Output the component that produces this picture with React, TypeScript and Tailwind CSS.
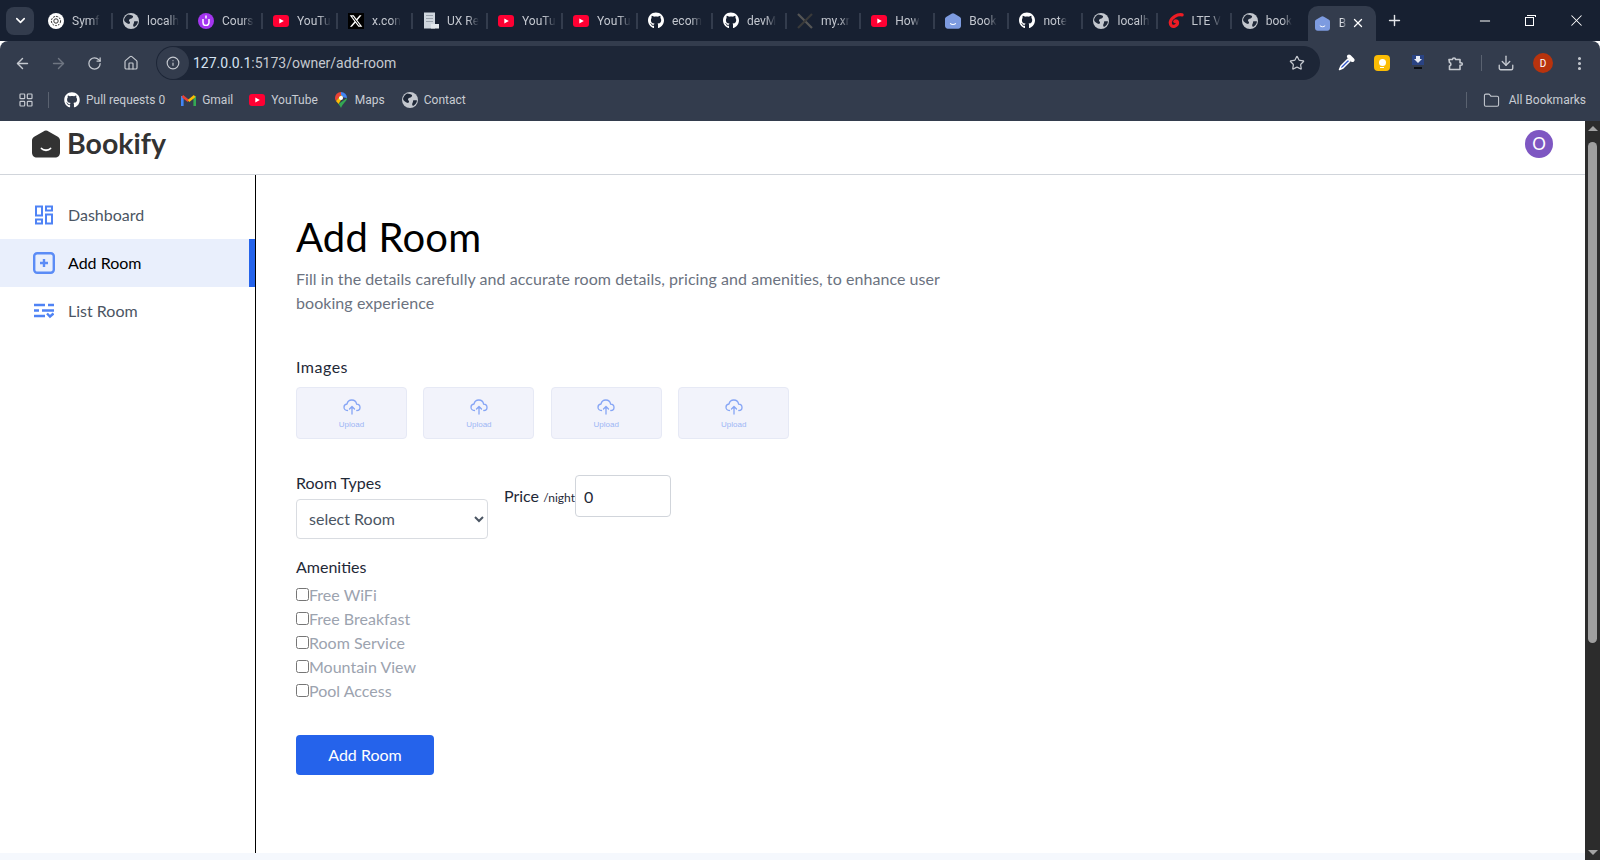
import { ArrowLeft, ArrowRight, ChevronDown, Download, EllipsisVertical, Folder, Home, Info, LayoutGrid, Minus, Plus, RotateCw, Star, X } from "lucide-react";
import { FaGithub, FaXTwitter } from "react-icons/fa6";

const uiFont = "font-['Roboto','Noto_Sans',sans-serif]";

function YouTubeIcon() {
  return (
    <svg width="16" height="12" viewBox="0 0 16 12">
      <rect width="16" height="12" rx="3" fill="#ff0033" />
      <path d="M6.300 3.400 10.800 6l-4.500 2.600z" fill="#fff" />
    </svg>
  );
}

function BookifyIcon({ size, color }: { size: number; color: string }) {
  return (
    <svg width={size} height={size} viewBox="0 0 28 28">
      <path
        d="M14 0.500 C15 0.500 15.800 0.900 16.600 1.500 L25.400 6.600 C27 7.500 28 8.700 28 10.600 V22.500 C28 25.500 26 27.500 23 27.500 H5 C2 27.500 0 25.500 0 22.500 V10.600 C0 8.700 1 7.500 2.600 6.600 L11.400 1.500 C12.200 0.900 13 0.500 14 0.500z"
        fill={color}
      />
      <path d="M9.500 18.500 C11.500 20.800 16.500 20.800 18.500 18.500" fill="none" stroke="#fff" strokeWidth="1.800" strokeLinecap="round" />
    </svg>
  );
}

function GlobeIcon() {
  return (
    <svg width="16" height="16" viewBox="0 0 16 16">
      <circle cx="8" cy="8" r="8" fill="#c3c7ce" />
      <path d="M5 1.500c2 .5 4 .5 5 1.500 .5 1.500-1 2.500-2.500 2.800C6 6.500 5.500 7.500 6.500 8.500c1 1 .5 2-.5 2.500C4 10.500 1.500 9 1 7c.5-2.500 2-4.500 4-5.500z" fill="#1f2838" />
      <path d="M11 8.500c1.500-.5 3-.5 4 0-.3 2.500-1.800 4.500-4 5.500-1-1-1-2-.5-3 .5-.8.700-1.700.5-2.500z" fill="#1f2838" />
    </svg>
  );
}

function Favicon({ kind }: { kind: string }) {
  if (kind === "yt") return <YouTubeIcon />;
  if (kind === "gh") return <FaGithub size={17} className="text-white" />;
  if (kind === "globe") return <GlobeIcon />;
  if (kind === "book") return <BookifyIcon size={16} color="#7d9be0" />;
  if (kind === "x")
    return (
      <div className="flex h-4 w-4 items-center justify-center bg-black">
        <FaXTwitter size={14} className="text-white" />
      </div>
    );
  if (kind === "gpt")
    return (
      <div className="flex h-4 w-4 items-center justify-center rounded-full bg-white">
        <svg width="12" height="12" viewBox="0 0 12 12" fill="none" stroke="#333" strokeWidth="1">
          <circle cx="6" cy="6" r="4.600" strokeDasharray="2 1" />
          <circle cx="6" cy="6" r="2.200" />
        </svg>
      </div>
    );
  if (kind === "udemy")
    return (
      <div className="flex h-4 w-4 items-center justify-center rounded-full bg-[#a435f0]">
        <svg width="8" height="11" viewBox="0 0 8 11" fill="none" stroke="#fff" strokeWidth="1.500">
          <path d="M1 4v3.500a3 3 0 0 0 6 0V4" />
          <path d="M4 0.500v3" />
        </svg>
      </div>
    );
  if (kind === "ux")
    return (
      <svg width="16" height="17" viewBox="0 0 16 17">
        <rect x="1" y="0.500" width="11" height="16" fill="#cfd6de" />
        <rect x="3" y="3" width="7" height="1" fill="#9aa3ad" />
        <rect x="3" y="6" width="7" height="1" fill="#9aa3ad" />
        <rect x="3" y="9" width="7" height="1" fill="#9aa3ad" />
        <rect x="8" y="12" width="8" height="4.500" fill="#e3e7ec" />
      </svg>
    );
  if (kind === "xr")
    return (
      <svg width="16" height="16" viewBox="0 0 16 16" fill="none" strokeWidth="2.200">
        <path d="M1 1 15 15" stroke="#555" />
        <path d="M15 1 1 15" stroke="#3a3a3a" />
      </svg>
    );
  if (kind === "airtel")
    return (
      <svg width="17" height="18" viewBox="0 0 17 18" fill="none" stroke="#ed1c24" strokeWidth="3.400" strokeLinecap="round">
        <path d="M15 2.500C10 1.500 3.500 5 2.500 10c-.5 3.500 2 5.500 4.500 4.500 2.500-1 3.500-3 2.800-5-.5-1-2-1-2.600 0" />
      </svg>
    );
  return null;
}

const tabs = [
  { kind: "gpt", title: "Symf" },
  { kind: "globe", title: "localh" },
  { kind: "udemy", title: "Cours" },
  { kind: "yt", title: "YouTu" },
  { kind: "x", title: "x.con" },
  { kind: "ux", title: "UX Re" },
  { kind: "yt", title: "YouTu" },
  { kind: "yt", title: "YouTu" },
  { kind: "gh", title: "ecom" },
  { kind: "gh", title: "devM" },
  { kind: "xr", title: "my.xr" },
  { kind: "yt", title: "How" },
  { kind: "book", title: "Book" },
  { kind: "gh", title: "note" },
  { kind: "globe", title: "localh" },
  { kind: "airtel", title: "LTE V" },
  { kind: "globe", title: "book" },
];

function TabStrip() {
  return (
    <div className={`flex h-[41px] items-center bg-[#172031] ${uiFont}`}>
      <div className="ml-[6px] mr-[4px] flex h-[28px] w-[28px] items-center justify-center rounded-lg bg-[#333c4d] text-white">
        <ChevronDown size={15} strokeWidth={2.5} />
      </div>
      {tabs.map((tab, i) => (
        <div key={i} className={`relative flex h-full items-center pl-[10px] ${i < 9 ? "w-[75px]" : "w-[74.1px]"}`}>
          <div className="flex w-[16px] justify-center">
            <Favicon kind={tab.kind} />
          </div>
          <span className="ml-[8px] whitespace-nowrap text-xs text-[#c3c7cf] [mask-image:linear-gradient(to_right,black_65%,transparent)]">
            {tab.title}
          </span>
          {i !== 16 && <div className="absolute right-0 h-[16px] w-[2px] bg-[#333c4d]" />}
        </div>
      ))}
      <div className="ml-[2px] flex h-[35px] w-[68px] items-center self-end rounded-t-[10px] bg-[#333c4d] pl-[7px] pb-[1px]">
        <BookifyIcon size={15} color="#7d9be0" />
        <span className="ml-[9px] w-[8px] text-xs text-[#d7dae0] [mask-image:linear-gradient(to_right,black_40%,transparent)]">B</span>
        <X size={14} strokeWidth={2.2} className="ml-[4px] text-white" />
      </div>
      <Plus size={17} strokeWidth={2} className="ml-[10px] text-[#e4e6ea]" />
      <Minus size={16} strokeWidth={1.5} className="ml-[74px] text-white" />
      <div className="relative ml-[32px] h-[11px] w-[11px]">
        <div className="absolute bottom-0 left-0 h-[9px] w-[9px] border border-white bg-[#172031]" />
        <div className="absolute right-0 top-0 h-[2px] w-[9px] border-t border-r border-white" />
      </div>
      <X size={19} strokeWidth={1.3} className="ml-[31px] text-white" />
    </div>
  );
}

function Toolbar() {
  return (
    <div className={`flex h-[44px] items-center rounded-t-lg bg-[#333c4d] text-[#c5c9d0] ${uiFont}`}>
      <ArrowLeft size={17} strokeWidth={2} className="ml-[14px]" />
      <ArrowRight size={17} strokeWidth={2} className="ml-[19px] text-[#6f7682]" />
      <RotateCw size={15} strokeWidth={2} className="ml-[20px]" />
      <Home size={16} strokeWidth={1.8} className="ml-[21px]" />
      <div className="ml-[17px] flex h-[34px] w-[1164px] items-center rounded-full bg-[#1d2637]">
        <div className="ml-[1px] flex h-[32px] w-[32px] items-center justify-center rounded-full bg-[#333c4d]">
          <Info size={14} strokeWidth={2} />
        </div>
        <span className="ml-[4px] text-sm text-[#d5e3f2]">
          127.0.0.1<span className="text-[#c5c9d0]">:5173/owner/add-room</span>
        </span>
        <Star size={16} strokeWidth={1.8} className="ml-auto mr-[15px]" />
      </div>
      <svg width="18" height="18" viewBox="0 0 18 18" fill="none" className="ml-[17px]">
        <path d="M12 2.500 15.500 6" stroke="#fff" strokeWidth="4" strokeLinecap="round" />
        <path d="M11 5 4 12l-1.500 3.500L6 14l7-7z" fill="#2f55c8" stroke="#fff" strokeWidth="1.500" strokeLinejoin="round" />
      </svg>
      <div className="ml-[19px] flex h-[16px] w-[16px] flex-col items-center justify-center rounded-sm bg-[#fbbc04]">
        <div className="h-[7px] w-[7px] rounded-full bg-white" />
        <div className="mt-[1px] h-[1px] w-[4px] bg-white" />
      </div>
      <svg width="12" height="16" viewBox="0 0 12 16" className="ml-[22px]">
        <rect width="12" height="10" fill="#2a4383" />
        <path d="M4 1h4v3h2L6 8 2 4h2z" fill="#e8ecf5" />
        <rect x="2" y="12" width="8" height="2" fill="#0b0e14" />
      </svg>
      <svg width="18" height="18" viewBox="0 0 18 18" fill="none" stroke="currentColor" strokeWidth="1.600" strokeLinejoin="round" className="ml-[22px]">
        <path d="M3 5.500h3.500a1.500 1.500 0 0 1 3 0H14v3.200h1a1.300 1.300 0 0 1 0 2.600h-1V15.500H3.500V12a1.800 1.800 0 0 0 0-3.500z" />
      </svg>
      <div className="ml-[17px] h-[16px] w-[1px] bg-[#5a6270]" />
      <Download size={18} strokeWidth={1.8} className="ml-[15px]" />
      <div className="ml-[18px] flex h-[20px] w-[20px] items-center justify-center rounded-full bg-[#b8330d] text-[10px] text-white">
        D
      </div>
      <EllipsisVertical size={17} strokeWidth={2.4} className="ml-[18px]" />
    </div>
  );
}

function BookmarkItem({ icon, label, className }: { icon: React.ReactNode; label: string; className?: string }) {
  return (
    <div className={`flex items-center ${className ?? ""}`}>
      <div className="mr-[6px] flex w-[16px] justify-center">{icon}</div>
      <span className="text-xs text-[#c8ccd3]">{label}</span>
    </div>
  );
}

function BookmarksBar() {
  return (
    <div className={`flex h-[36px] items-center bg-[#333c4d] pb-[6px] pl-[18px] pr-[14px] ${uiFont}`}>
      <LayoutGrid size={16} strokeWidth={1.8} className="text-[#c5c9d0]" />
      <div className="ml-[14px] mr-[15px] h-[16px] w-[1px] bg-[#5a6270]" />
      <BookmarkItem icon={<FaGithub size={16} className="text-white" />} label="Pull requests 0" className="mr-[15px]" />
      <BookmarkItem
        icon={
          <svg width="15" height="12" viewBox="0 0 15 12" fill="none" strokeWidth="2.600">
            <path d="M1.300 12V2" stroke="#4285f4" />
            <path d="M13.700 12V2" stroke="#34a853" />
            <path d="M1.300 2 7.500 7" stroke="#ea4335" />
            <path d="M13.700 2 7.500 7" stroke="#fbbc04" />
          </svg>
        }
        label="Gmail"
        className="mr-[16px]"
      />
      <BookmarkItem icon={<YouTubeIcon />} label="YouTube" className="mr-[15px]" />
      <BookmarkItem
        icon={
          <svg width="12" height="16" viewBox="0 0 12 16">
            <path d="M6 0a6 6 0 0 0-6 6c0 1.200.4 2.200 1 3l5-6z" fill="#ea4335" />
            <path d="M6 0a6 6 0 0 1 6 6l-6-1z" fill="#4285f4" />
            <path d="M12 6c0 3-4 5-6 10-.5-1.500-1.500-2.800-2.500-4L12 6z" fill="#34a853" />
            <path d="M1 9l5-6 2 2-4.500 7z" fill="#fbbc04" />
            <circle cx="6" cy="6" r="2" fill="#fff" />
          </svg>
        }
        label="Maps"
        className="mr-[17px]"
      />
      <BookmarkItem icon={<GlobeIcon />} label="Contact" />
      <div className="ml-auto mr-[16px] h-[16px] w-[1px] bg-[#5a6270]" />
      <Folder size={17} strokeWidth={1.5} className="mr-[9px] text-[#c5c9d0]" />
      <span className="text-xs text-[#c8ccd3]">All Bookmarks</span>
    </div>
  );
}

function Scrollbar() {
  return (
    <div className="flex w-[15px] flex-col items-center bg-[#2c2c2c]">
      <div className="mt-[5px] h-0 w-0 border-x-[5px] border-b-[5px] border-x-transparent border-b-[#a3a3a3]" />
      <div className="mt-[11px] h-[501px] w-[9px] rounded-full bg-[#9f9f9f]" />
      <div className="mb-[5px] mt-auto h-0 w-0 border-x-[5px] border-t-[5px] border-x-transparent border-t-[#a3a3a3]" />
    </div>
  );
}

function DashboardIcon() {
  return (
    <svg width="20" height="20" viewBox="0 0 20 20" fill="none" stroke="#4f83f5" strokeWidth="2">
      <rect x="2" y="1.500" width="6" height="9" />
      <rect x="12" y="1.500" width="6" height="4" />
      <rect x="2" y="14.500" width="6" height="4" />
      <rect x="12" y="9.500" width="6" height="9" />
    </svg>
  );
}

function AddRoomIcon() {
  return (
    <svg width="22" height="22" viewBox="0 0 22 22" fill="none" stroke="#5b8cf6" strokeWidth="2.400">
      <rect x="1.200" y="1.200" width="19.600" height="19.600" rx="3" />
      <path d="M11 7v8M7 11h8" />
    </svg>
  );
}

function ListRoomIcon() {
  return (
    <svg width="20" height="16" viewBox="0 0 20 16" fill="none" stroke="#4f83f5" strokeWidth="2.400">
      <path d="M0 2h11M14 2h6M0 7.500h5M8 7.500h12M0 13h11M13 10.500l3 3 3.500-3" />
    </svg>
  );
}

const navItems = [
  { label: "Dashboard", icon: <DashboardIcon />, active: false },
  { label: "Add Room", icon: <AddRoomIcon />, active: true },
  { label: "List Room", icon: <ListRoomIcon />, active: false },
];

function Sidebar() {
  return (
    <aside className="w-[256px] shrink-0 border-r border-black pt-4">
      {navItems.map((item) => (
        <div
          key={item.label}
          className={`flex h-[48px] items-center ${item.active ? "border-r-[6px] border-[#2563eb] bg-[#e9effc] text-black" : "text-[#4b5563]"}`}
        >
          <div className="ml-[33px] flex w-[22px] justify-center">{item.icon}</div>
          <span className="ml-[13px] text-base">{item.label}</span>
        </div>
      ))}
    </aside>
  );
}

function UploadBox() {
  return (
    <div className="flex h-[52px] w-[111px] flex-col items-center rounded-sm border border-[#e6e9f5] bg-[#f2f3fb] pt-[11px]">
      <svg width="18" height="16" viewBox="0 0 18 16" fill="none" stroke="#86a5f5" strokeWidth="1.300" strokeLinecap="round" strokeLinejoin="round">
        <path d="M4.500 11.500C2.500 11.500 1 10 1 8.200 1 6.500 2.300 5.200 4 5 4.500 2.600 6.500 1 8.800 1c2.500 0 4.500 1.800 4.800 4.200 1.900.1 3.400 1.400 3.400 3.200 0 1.700-1.300 3.100-3.200 3.100" />
        <path d="M9 15V7.500M6.500 10 9 7.500 11.500 10" />
      </svg>
      <span className="mt-[5px] font-['Liberation_Sans',sans-serif] text-[8px] leading-[10px] text-[#9db6f5]">Upload</span>
    </div>
  );
}

const amenities = ["Free WiFi", "Free Breakfast", "Room Service", "Mountain View", "Pool Access"];

function AddRoomForm() {
  return (
    <main className="flex-1 pl-[40px] pt-[37px]">
      <h1 className="text-[40px] leading-[50px] tracking-[0.2px] text-black">Add Room</h1>
      <p className="mt-[5px] w-[660px] text-base leading-6 tracking-[0.06px] text-[#6b7280]">
        Fill in the details carefully and accurate room details, pricing and amenities, to enhance user booking experience
      </p>
      <div className="mt-[40px]">
        <p className="text-base leading-6 tracking-[0.5px] text-[#1f2937]">Images</p>
        <div className="mt-[8px] flex gap-[16.4px]">
          <UploadBox />
          <UploadBox />
          <UploadBox />
          <UploadBox />
        </div>
      </div>
      <div className="mt-[23px] flex items-start">
        <div className="mt-[9px] w-[192px]">
          <p className="text-base leading-6 text-[#1f2937]">Room Types</p>
          <select className="mt-[4px] h-[40px] w-full rounded border border-[#d9dce1] pb-[2px] pl-[8px] text-base text-[#4b5563]">
            <option>select Room</option>
          </select>
        </div>
        <div className="ml-[16px] mt-[13px] flex items-center">
          <span className="text-base text-[#1f2937]">
            Price <span className="text-xs">/night</span>
          </span>
          <input
            type="number"
            defaultValue={0}
            className="h-[42px] w-[96px] rounded border border-[#d1d5db] pl-[8px] text-base text-[#1f2937]"
          />
        </div>
      </div>
      <div className="mt-[16px]">
        <p className="text-base leading-6 text-[#1f2937]">Amenities</p>
        <div className="mt-[4px] flex flex-col">
          {amenities.map((name) => (
            <label key={name} className="flex h-[24px] items-center text-base text-[#9ca3af]">
              <input type="checkbox" className="m-0 h-[13px] w-[13px] -translate-y-[1px]" />
              {name}
            </label>
          ))}
        </div>
      </div>
      <button className="mt-[32px] flex h-[40px] w-[138px] items-center justify-center rounded bg-[#2563eb] text-base text-white">
        Add Room
      </button>
    </main>
  );
}

export default function App() {
  return (
    <div className="flex h-[860px] w-[1600px] flex-col overflow-hidden bg-white">
      <TabStrip />
      <Toolbar />
      <BookmarksBar />
      <div className="flex min-h-0 flex-1">
        <div className="flex min-w-0 flex-1 flex-col font-['Lato',sans-serif]">
          <header className="flex h-[54px] items-center justify-between border-b border-[#d1d5db] pb-[8px] pl-[32px] pr-[32px]">
            <div className="flex items-center gap-[7px]">
              <BookifyIcon size={28} color="#333333" />
              <span className="text-[28.5px] font-bold leading-none text-[#333]">Bookify</span>
            </div>
            <div className="flex h-[28px] w-[28px] items-center justify-center rounded-full bg-[#7e57c2] text-[17px] text-white">O</div>
          </header>
          <div className="flex min-h-0 flex-1">
            <Sidebar />
            <AddRoomForm />
          </div>
          <div className="h-[7px] bg-[#f5f8fd]" />
        </div>
        <Scrollbar />
      </div>
    </div>
  );
}
